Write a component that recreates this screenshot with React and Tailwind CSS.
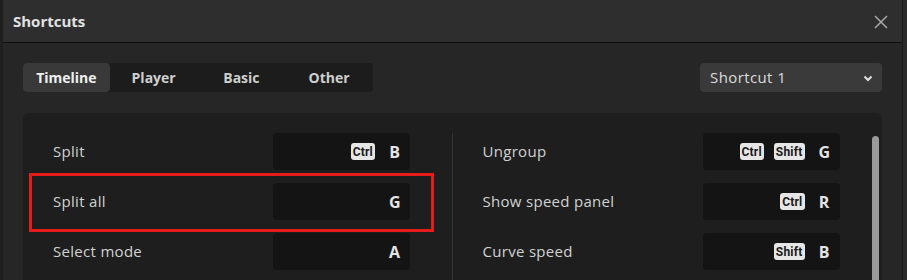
import React from "react";

const leftRows = [
  { label: "Split", keys: ["Ctrl"], key: "B" },
  { label: "Split all", keys: [], key: "G", marked: true },
  { label: "Select mode", keys: [], key: "A" },
];

const rightRows = [
  { label: "Ungroup", keys: ["Ctrl", "Shift"], key: "G" },
  { label: "Show speed panel", keys: ["Ctrl"], key: "R" },
  { label: "Curve speed", keys: ["Shift"], key: "B" },
];

const tabs = ["Timeline", "Player", "Basic", "Other"];

const ShortcutRow = ({ label, keys, keyName, marked }) => (
  <div className="relative flex h-[50px] items-start pl-[30px]">
    {marked && (
      <div className="pointer-events-none absolute left-[6px] top-[-10px] h-[59px] w-[405px] border-[3px] border-[#e41c1c]" />
    )}
    <div className="flex h-[37px] w-[220px] items-center text-[15px] tracking-[0.3px] text-[#d2d2d2]">
      {label}
    </div>
    <div className="flex h-[37px] w-[137px] items-center justify-end rounded-[4px] bg-[#141414] pr-[10px]">
      {keys.map((k) => (
        <span
          key={k}
          className="mr-[10px] flex h-[17px] items-center rounded-[3px] bg-[#e6e6e6] px-[2px] text-[12px] font-bold leading-none tracking-[0.2px] text-[#1a1a1a]"
          style={{ fontFamily: "Roboto, sans-serif" }}
        >
          {k}
        </span>
      ))}
      <span className="ml-[4px] w-[11px] text-center text-[16px] font-bold text-[#e4e4e4]">
        {keyName}
      </span>
    </div>
  </div>
);

export default function App() {
  return (
    <div
      className="flex h-[280px] w-[907px] overflow-hidden bg-[#1b1b1b]"
      style={{ fontFamily: '"Open Sans", "Noto Sans", sans-serif' }}
    >
      <div className="w-[3px] shrink-0 bg-[#1f1f1f]" />
      <div className="flex w-[899px] flex-col bg-[#262626]">
        <div className="flex h-[43px] shrink-0 items-center justify-between border-b border-[#0e0e0e] bg-[#2e2e2e] pl-[10px] pr-[14px]">
          <span className="text-[15px] font-bold text-[#e2e2e2]">Shortcuts</span>
          <svg width="14" height="14" viewBox="0 0 14 14" className="mt-[1px]">
            <path d="M1 1L13 13M13 1L1 13" stroke="#a8a8a8" strokeWidth="1.5" />
          </svg>
        </div>

        <div className="flex flex-col px-[20px] pt-[20px]">
          <div className="flex items-center justify-between">
            <div className="flex h-[29px] w-[350px] rounded-[4px] bg-[#1c1c1c]">
              {tabs.map((t, i) => (
                <div
                  key={t}
                  className={
                    i === 0
                      ? "flex w-[87px] items-center justify-center rounded-[4px] bg-[#393939] text-[14px] font-bold text-[#f0f0f0]"
                      : "flex w-[88px] items-center justify-center text-[14px] font-bold text-[#cfcfcf]"
                  }
                >
                  {t}
                </div>
              ))}
            </div>
            <div className="flex h-[29px] w-[182px] items-center justify-between rounded-[4px] bg-[#3a3a3a] pl-[10px] pr-[9px]">
              <span className="text-[15px] tracking-[0.4px] text-[#dcdcdc]">Shortcut 1</span>
              <svg width="10" height="8" viewBox="0 0 10 8">
                <path d="M1.5 2.5L5 6L8.5 2.5" stroke="#e0e0e0" strokeWidth="2" fill="none" />
              </svg>
            </div>
          </div>

          <div className="relative mt-[21px] flex h-[200px] rounded-t-[6px] bg-[#1e1e1e] pt-[20px]">
            <div className="w-[430px] border-r border-[#333]">
              {leftRows.map((r) => (
                <ShortcutRow key={r.label} label={r.label} keys={r.keys} keyName={r.key} marked={r.marked} />
              ))}
            </div>
            <div className="w-[430px]">
              {rightRows.map((r) => (
                <ShortcutRow key={r.label} label={r.label} keys={r.keys} keyName={r.key} />
              ))}
            </div>
            <div className="absolute right-[3px] top-[23px] h-[200px] w-[7px] rounded-t-full bg-[#9a9a9a]" />
          </div>
        </div>
      </div>
      <div className="w-[5px] shrink-0 border-l border-[#1a1a1a] bg-[#2a2a2a]" />
    </div>
  );
}
